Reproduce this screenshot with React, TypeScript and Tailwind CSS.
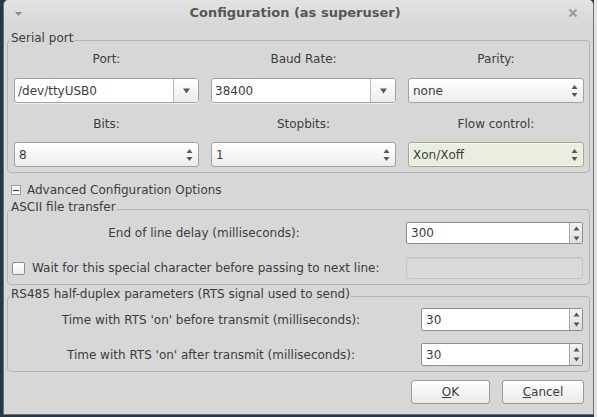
import React from 'react';

const txt = "font-['DejaVu_Sans',sans-serif] text-[12px] leading-[14px] text-[#3c3c3c]";

function DownArrow() {
  return (
    <svg width="7" height="6" viewBox="0 0 7 6">
      <path d="M0 0.5 L7 0.5 L3.5 5.5 Z" fill="#5a5a5a" />
    </svg>
  );
}

function UpDown() {
  return (
    <svg width="7" height="14" viewBox="0 0 7 14">
      <path d="M3.5 1 L6.5 5 L0.5 5 Z" fill="#555" />
      <path d="M0.5 9 L6.5 9 L3.5 13 Z" fill="#555" />
    </svg>
  );
}

function EntryCombo({ value }: { value: string }) {
  return (
    <div className="h-[25px] flex rounded-[3px] border border-[#a2a2a2] bg-white overflow-hidden shadow-[0_1px_0_rgba(255,255,255,0.6)]">
      <div className={`${txt} flex-1 flex items-center pl-[3px] text-[#2e2e2e]`}>{value}</div>
      <div className="w-[25px] border-l border-[#b8b8b8] bg-gradient-to-b from-white to-[#ececec] flex items-center justify-center">
        <DownArrow />
      </div>
    </div>
  );
}

function SpinCombo({ value, focused }: { value: string; focused?: boolean }) {
  return (
    <div
      className={`h-[25px] flex items-center rounded-[3px] border pl-[4px] pr-[5px] ${
        focused
          ? 'border-[#9aae86] bg-[#e9eee1] shadow-[inset_0_0_0_1px_#f4f7ef]'
          : 'border-[#a2a2a2] bg-gradient-to-b from-white to-[#ededed]'
      }`}
    >
      <div className={`${txt} flex-1 text-[#2e2e2e]`}>{value}</div>
      <UpDown />
    </div>
  );
}

function SpinButton({ value, h }: { value: string; h: string }) {
  return (
    <div className={`${h} flex rounded-[2px] border border-[#8e8e8e] bg-white overflow-hidden`}>
      <div className={`${txt} flex-1 flex items-center pl-[4px] text-[#2e2e2e]`}>{value}</div>
      <div className="w-[13px] border-l border-[#a8a8a8] bg-gradient-to-b from-[#f2f2f2] to-[#dedede] flex flex-col">
        <div className="flex-1 flex items-center justify-center">
          <svg width="7" height="5" viewBox="0 0 7 5"><path d="M3.5 0.5 L6.5 4.5 L0.5 4.5 Z" fill="#555" /></svg>
        </div>
        <div className="flex-1 flex items-center justify-center">
          <svg width="7" height="5" viewBox="0 0 7 5"><path d="M0.5 0.5 L6.5 0.5 L3.5 4.5 Z" fill="#555" /></svg>
        </div>
      </div>
    </div>
  );
}

function Group({ title, children, className }: { title: string; children: React.ReactNode; className?: string }) {
  return (
    <fieldset className={`mx-[3px] border border-[#b4b4b4] rounded-[4px] ${className ?? ''}`}>
      <legend className={`${txt} ml-[2px] px-[1px] pb-[4px]`}>{title}</legend>
      {children}
    </fieldset>
  );
}

export default function App() {
  return (
    <div className="w-[597px] h-[417px] bg-[#213a4b] flex overflow-hidden">
      <div className="ml-[3px] w-[591px] h-[415px] bg-[#d7d7d7] rounded-t-[5px] border-x border-b border-[#6d6d6d] flex flex-col">
        {/* title bar */}
        <div className="h-[26px] flex items-center rounded-t-[5px] bg-gradient-to-b from-[#e3e3e3] to-[#d7d7d7] px-[11px]">
          <svg width="7" height="4" viewBox="0 0 7 4" className="mt-[2px]">
            <path d="M0 0 L7 0 L3.5 4 Z" fill="#8a8a8a" />
          </svg>
          <div className="flex-1 text-center font-['DejaVu_Sans',sans-serif] text-[13px] font-bold text-[#575757]">
            Configuration (as superuser)
          </div>
          <svg width="10" height="10" viewBox="0 0 10 10" className="mr-[4px]">
            <path d="M1.5 1.5 L8.5 8.5 M8.5 1.5 L1.5 8.5" stroke="#9a9a9a" strokeWidth="2" />
          </svg>
        </div>

        <Group title="Serial port" className="mt-[5px] pb-[5px]">
          <div className="grid grid-cols-[185px_185px_176px] gap-x-[12px] pl-[6px] pt-[3px]">
            <div className={`${txt} text-center`}>Port:</div>
            <div className={`${txt} text-center`}>Baud Rate:</div>
            <div className={`${txt} text-center`}>Parity:</div>
            <div className="mt-[12px]"><EntryCombo value="/dev/ttyUSB0" /></div>
            <div className="mt-[12px]"><EntryCombo value="38400" /></div>
            <div className="mt-[12px]"><SpinCombo value="none" /></div>
            <div className={`${txt} text-center mt-[14px]`}>Bits:</div>
            <div className={`${txt} text-center mt-[14px]`}>Stopbits:</div>
            <div className={`${txt} text-center mt-[14px]`}>Flow control:</div>
            <div className="mt-[11px]"><SpinCombo value="8" /></div>
            <div className="mt-[11px]"><SpinCombo value="1" /></div>
            <div className="mt-[11px]"><SpinCombo value="Xon/Xoff" focused /></div>
          </div>
        </Group>

        <div className="mt-[10px] ml-[7px] flex items-center gap-[6px]">
          <div className="w-[10px] h-[10px] border border-[#9c9c9c] bg-white flex items-center justify-center">
            <div className="w-[6px] h-[1px] bg-[#333]" />
          </div>
          <div className={txt}>Advanced Configuration Options</div>
        </div>

        <Group title="ASCII file transfer" className="mt-[3px] pb-[5px]">
          <div className="pl-[4px] pr-[6px]">
            <div className="mt-[4px] flex items-center">
              <div className={`${txt} w-[384px] text-center`}>End of line delay (milliseconds):</div>
              <div className="ml-[10px] w-[177px]"><SpinButton value="300" h="h-[22px]" /></div>
            </div>
            <div className="mt-[13px] flex items-center">
              <div className="w-[13px] h-[13px] rounded-[2px] border border-[#8c8c8c] bg-gradient-to-b from-white to-[#f0f0f0]" />
              <div className={`${txt} ml-[7px] flex-1`}>Wait for this special character before passing to next line:</div>
              <div className="w-[177px] h-[22px] rounded-[3px] border border-[#c3c3c3] bg-[#d9d9d9] shadow-[inset_0_1px_1px_rgba(0,0,0,0.06)]" />
            </div>
          </div>
        </Group>

        <Group title="RS485 half-duplex parameters (RTS signal used to send)" className="mt-[2px] pb-[5px]">
          <div className="pl-[6px]">
            <div className="mt-[3px] flex items-center">
              <div className={`${txt} w-[394px] text-center`}>Time with RTS 'on' before transmit (milliseconds):</div>
              <div className="ml-[13px] w-[162px]"><SpinButton value="30" h="h-[23px]" /></div>
            </div>
            <div className="mt-[12px] flex items-center">
              <div className={`${txt} w-[394px] text-center`}>Time with RTS 'on' after transmit (milliseconds):</div>
              <div className="ml-[13px] w-[162px]"><SpinButton value="30" h="h-[23px]" /></div>
            </div>
          </div>
        </Group>

        <div className="mt-[8px] flex justify-end gap-[12px] pr-[9px]">
          <button className={`${txt} w-[79px] h-[24px] rounded-[3px] border border-[#9a9a9a] bg-gradient-to-b from-white to-[#e9e9e9]`}>
            <span className="underline">O</span>K
          </button>
          <button className={`${txt} w-[82px] h-[24px] rounded-[3px] border border-[#9a9a9a] bg-gradient-to-b from-white to-[#e9e9e9]`}>
            <span className="underline">C</span>ancel
          </button>
        </div>
      </div>
      <div className="flex-1 bg-[#e4e4e4]" />
    </div>
  );
}
